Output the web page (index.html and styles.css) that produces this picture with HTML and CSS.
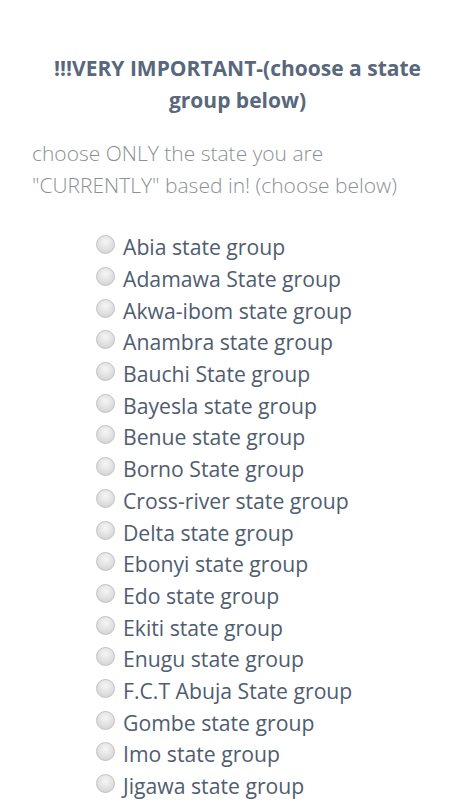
FILE: index.html
```html
<!DOCTYPE html>
<html>
<head>
<meta charset="utf-8">
<link rel="stylesheet" href="styles.css">
</head>
<body>
<div class="page">
  <h2 class="title">!!!VERY IMPORTANT-(choose a state group below)</h2>
  <p class="desc">choose ONLY the state you are "CURRENTLY" based in! (choose below)</p>
  <ul class="options">
    <li><span class="radio"></span><span class="label">Abia state group</span></li>
    <li><span class="radio"></span><span class="label">Adamawa State group</span></li>
    <li><span class="radio"></span><span class="label">Akwa-ibom state group</span></li>
    <li><span class="radio"></span><span class="label">Anambra state group</span></li>
    <li><span class="radio"></span><span class="label">Bauchi State group</span></li>
    <li><span class="radio"></span><span class="label">Bayesla state group</span></li>
    <li><span class="radio"></span><span class="label">Benue state group</span></li>
    <li><span class="radio"></span><span class="label">Borno State group</span></li>
    <li><span class="radio"></span><span class="label">Cross-river state group</span></li>
    <li><span class="radio"></span><span class="label">Delta state group</span></li>
    <li><span class="radio"></span><span class="label">Ebonyi state group</span></li>
    <li><span class="radio"></span><span class="label">Edo state group</span></li>
    <li><span class="radio"></span><span class="label">Ekiti state group</span></li>
    <li><span class="radio"></span><span class="label">Enugu state group</span></li>
    <li><span class="radio"></span><span class="label">F.C.T Abuja State group</span></li>
    <li><span class="radio"></span><span class="label">Gombe state group</span></li>
    <li><span class="radio"></span><span class="label">Imo state group</span></li>
    <li><span class="radio"></span><span class="label">Jigawa state group</span></li>
  </ul>
</div>
</body>
</html>
```
FILE: styles.css
```css
html, body {
  margin: 0;
  padding: 0;
  background: #ffffff;
}
.page {
  font-family: "Open Sans", "Noto Sans", sans-serif;
  padding: 52px 32px 0 32px;
}
.title {
  margin: 0;
  text-align: center;
  font-size: 21px;
  font-weight: 700;
  line-height: 32px;
  color: #58677c;
  padding: 0 14px;
}
.desc {
  margin: 21px 0 0 0;
  font-size: 21px;
  font-weight: 300;
  line-height: 32px;
  color: #8b9096;
}
.options {
  list-style: none;
  margin: 30px 0 0 0;
  padding: 0 0 0 64px;
}
.options li {
  display: flex;
  align-items: center;
  height: 31.7px;
}
.radio {
  width: 17px;
  height: 17px;
  border-radius: 50%;
  border: 1px solid #c2c2c2;
  background: radial-gradient(circle at 50% 35%, #f6f6f6 0%, #dedede 60%, #cdcdcd 100%);
  margin-right: 8px;
  flex: none;
  position: relative;
  top: -2px;
}
.label {
  font-size: 21.2px;
  color: #4f5d70;
  line-height: 31px;
}
```
